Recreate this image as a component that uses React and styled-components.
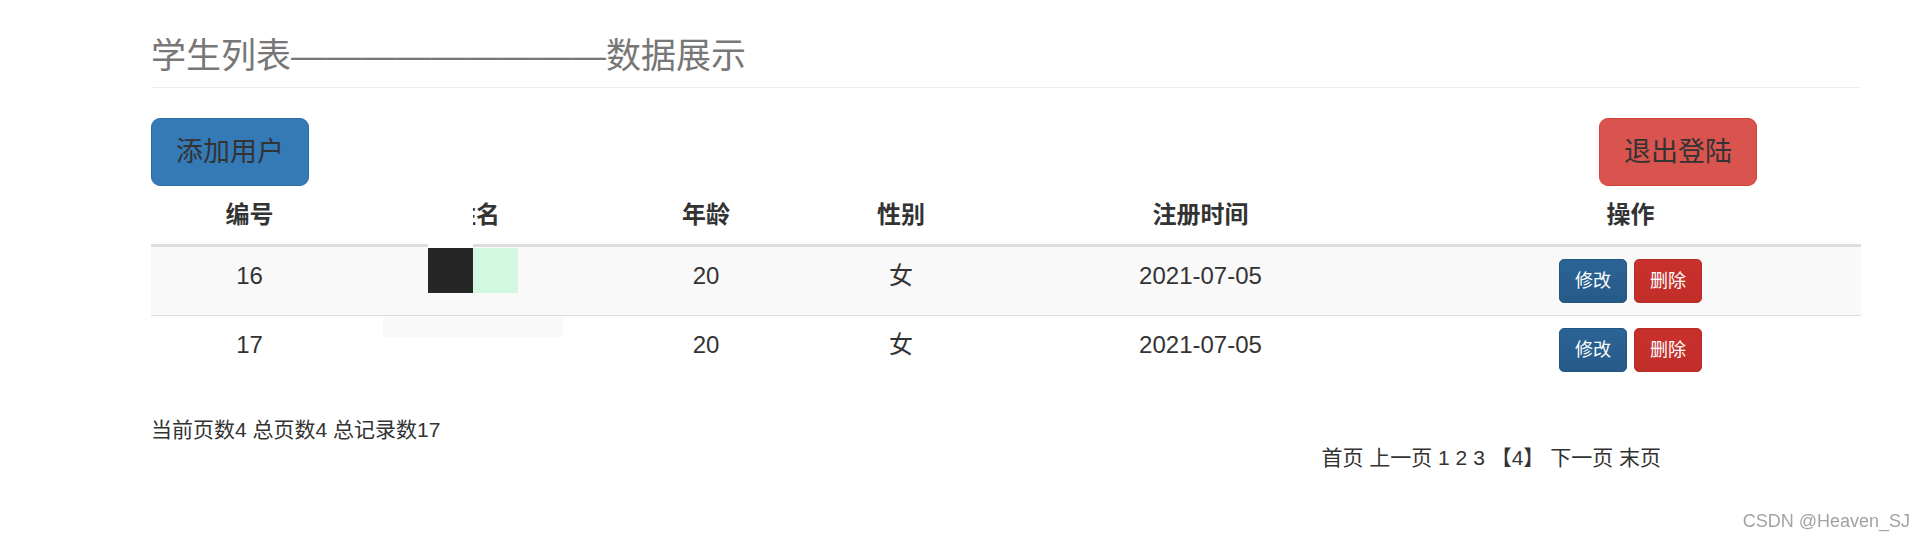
import styled, { createGlobalStyle, css } from 'styled-components';

const GlobalStyle = createGlobalStyle`
    body {
        margin: 0;
        background: #fff;
        color: #333;
        font-family: "Liberation Sans", "Noto Sans CJK SC", sans-serif;
    }
`;

const Page = styled.div`
    width: 1710px;
    margin-left: 151px;
`;

const Title = styled.h1`
    margin: 0;
    padding: 31px 0 6px;
    font-size: 35px;
    font-weight: normal;
    line-height: 50px;
    color: #777;
    border-bottom: 1px solid #eee;
`;

const Toolbar = styled.div`
    display: flex;
    justify-content: space-between;
    margin-top: 30px;
    padding-right: 104px;
`;

const BigButton = styled.button`
    height: 68px;
    padding: 0 24px;
    font-family: inherit;
    font-size: 27px;
    line-height: 66px;
    color: #333;
    border-radius: 9px;
    border: 1px solid ${p => (p.$danger ? '#d43f3a' : '#2e6da4')};
    background: ${p => (p.$danger ? '#d9534f' : '#337ab7')};
`;

const TableWrap = styled.div`
    position: relative;
`;

const Table = styled.table`
    width: 1710px;
    border-collapse: collapse;
    table-layout: fixed;
    font-size: 24px;
    line-height: 34px;

    th {
        padding: 12px;
        font-weight: bold;
        text-align: center;
        border-bottom: 3px solid #ddd;
    }

    td {
        padding: 12px;
        text-align: center;
        vertical-align: top;
        border-top: 1px solid #ddd;
    }

    th:last-child,
    td:last-child {
        padding-right: 19px;
    }
`;

const Row = styled.tr`
    background: ${p => (p.$striped ? '#f9f9f9' : 'transparent')};
`;

const ActionGroup = styled.div`
    display: flex;
    justify-content: center;
    gap: 7px;
`;

const SmallButton = styled.button`
    height: 44px;
    padding: 0 15px;
    font-family: inherit;
    font-size: 18px;
    line-height: 42px;
    color: #fff;
    border-radius: 5px;
    ${p => (p.$danger
        ? css`
            border: 1px solid #b92c28;
            background: linear-gradient(to bottom, #c9302c 0%, #c12e2a 100%);
        `
        : css`
            border: 1px solid #245580;
            background: linear-gradient(to bottom, #2a6496 0%, #265a88 100%);
        `)}
`;

/* mosaic patches laid over the name column */
const Patch = styled.div`
    position: absolute;
    left: ${p => p.$x}px;
    top: ${p => p.$y}px;
    width: ${p => p.$w}px;
    height: ${p => p.$h}px;
    background: ${p => p.$color};
`;

const Footer = styled.div`
    display: flex;
    justify-content: space-between;
    align-items: flex-start;
    margin-top: 31px;
    padding-right: 200px;
    font-size: 21px;
    line-height: 30px;
`;

const Info = styled.div``;

const Pager = styled.div`
    margin-top: 28px;
`;

const Watermark = styled.div`
    position: fixed;
    right: 15px;
    bottom: 8px;
    font-size: 18px;
    line-height: 20px;
    color: #a3a3a3;
`;

const students = [
    { id: 16, age: 20, sex: '女', date: '2021-07-05' },
    { id: 17, age: 20, sex: '女', date: '2021-07-05' },
];

const widths = [197, 256, 204, 186, 413, 454];

export default function App() {
    return (<>
        <GlobalStyle />
        <Page>
            <Title>学生列表—————————数据展示</Title>
            <Toolbar>
                <BigButton>添加用户</BigButton>
                <BigButton $danger>退出登陆</BigButton>
            </Toolbar>
            <TableWrap>
                <Table>
                    <colgroup>
                        {widths.map((w, i) => <col key={i} style={{ width: w }} />)}
                    </colgroup>
                    <thead>
                        <tr>
                            <th>编号</th>
                            <th>姓名</th>
                            <th>年龄</th>
                            <th>性别</th>
                            <th>注册时间</th>
                            <th>操作</th>
                        </tr>
                    </thead>
                    <tbody>
                        {students.map((s, i) => (
                            <Row key={s.id} $striped={i % 2 === 0}>
                                <td>{s.id}</td>
                                <td></td>
                                <td>{s.age}</td>
                                <td>{s.sex}</td>
                                <td>{s.date}</td>
                                <td>
                                    <ActionGroup>
                                        <SmallButton>修改</SmallButton>
                                        <SmallButton $danger>删除</SmallButton>
                                    </ActionGroup>
                                </td>
                            </Row>
                        ))}
                    </tbody>
                </Table>
                <Patch $x={277} $y={4} $w={45} $h={58} $color="#fff" />
                <Patch $x={277} $y={62} $w={45} $h={45} $color="#262626" />
                <Patch $x={322} $y={62} $w={45} $h={45} $color="#d3f8e2" />
                <Patch $x={232} $y={130} $w={180} $h={21} $color="#f9f9f9" />
            </TableWrap>
            <Footer>
                <Info>当前页数4 总页数4 总记录数17</Info>
                <Pager>首页 上一页 1 2 3 【4】 下一页 末页</Pager>
            </Footer>
        </Page>
        <Watermark>CSDN @Heaven_SJ</Watermark>
    </>);
}
